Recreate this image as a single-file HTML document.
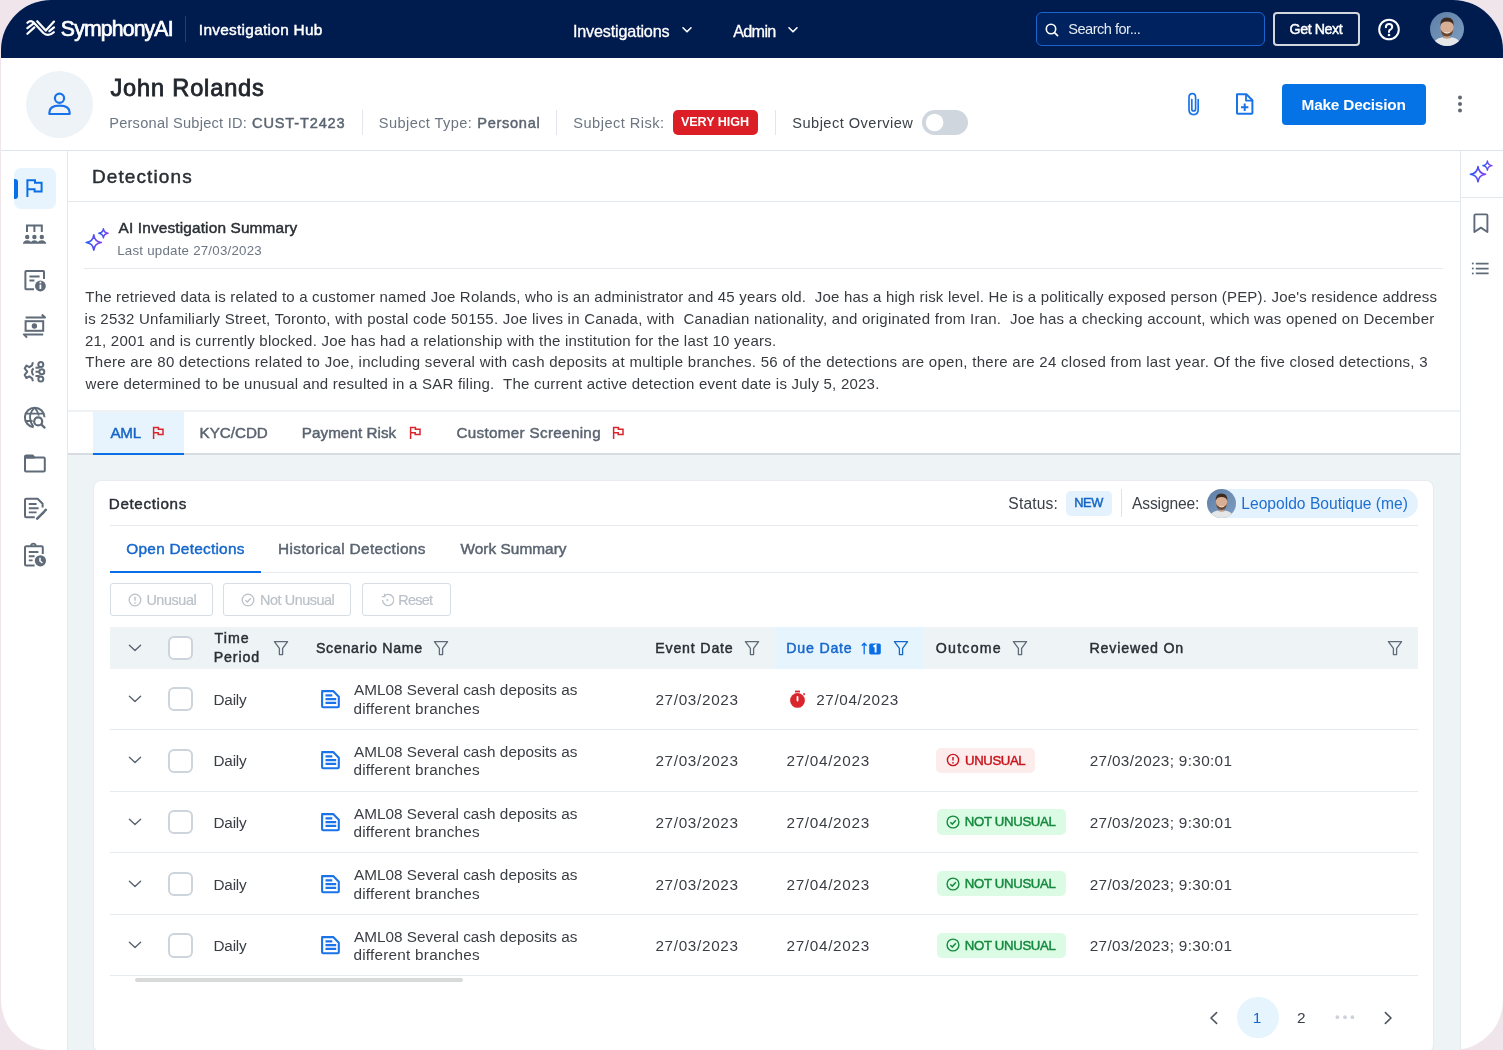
<!DOCTYPE html>
<html><head><meta charset="utf-8"><style>
html,body{margin:0;padding:0;}
body{width:1503px;height:1050px;overflow:hidden;background:#f0e5eb;position:relative;font-family:"Liberation Sans",sans-serif;}
#pg{position:absolute;left:1px;top:0;width:1502px;height:1050px;overflow:hidden;border-radius:50px;background:#fff;}
#in{position:absolute;left:-1px;top:0;width:1503px;height:1050px;will-change:transform;}
.t{position:absolute;white-space:pre;}
.r{position:absolute;}
</style></head><body><div id="pg"><div id="in">
<div class="r" style="left:0px;top:0px;width:1503px;height:58px;background:#001c4f;"></div>
<svg class="r" style="left:22px;top:15px;" width="40" height="25" viewBox="0 0 40 25" fill="none"><g stroke="#fff" stroke-width="2.2" stroke-linecap="round" stroke-linejoin="round" fill="none">
<path d="M5.4,7.8 Q8.6,4.6 11.6,7.4 L21.4,18 Q26.4,22.2 31.8,17.2"/>
<path d="M5.4,13.2 L11,8.8"/><path d="M5.4,18.8 L12.4,12.4"/>
<path d="M15.2,6.2 L23.8,15.6 L32,6.6"/>
<path d="M27.4,16.2 L32,12.4"/></g></svg>
<div class="t" style="left:60.85px;top:17.55px;font-size:21.20px;line-height:21.20px;-webkit-text-stroke:0.7px #fff;color:#fff;letter-spacing:-0.822px;">SymphonyAI</div>
<div class="r" style="left:185px;top:16px;width:1px;height:26px;background:#1d3f78;"></div>
<div class="t" style="left:198.82px;top:22.06px;font-size:15.40px;line-height:15.40px;-webkit-text-stroke:0.45px #fff;color:#fff;letter-spacing:0.291px;">Investigation Hub</div>
<div class="t" style="left:572.95px;top:23.18px;font-size:16.20px;line-height:16.20px;-webkit-text-stroke:0.3px #fff;color:#fff;letter-spacing:-0.177px;">Investigations</div>
<svg class="r" style="left:680px;top:25px;" width="14" height="10" viewBox="0 0 14 10" fill="none"><path d="M3,2.8 L7,6.8 L11,2.8" stroke="#fff" stroke-width="1.6" stroke-linecap="round" stroke-linejoin="round"/></svg>
<div class="t" style="left:733.15px;top:23.18px;font-size:16.20px;line-height:16.20px;-webkit-text-stroke:0.3px #fff;color:#fff;letter-spacing:-0.675px;">Admin</div>
<svg class="r" style="left:786px;top:25px;" width="14" height="10" viewBox="0 0 14 10" fill="none"><path d="M3,2.8 L7,6.8 L11,2.8" stroke="#fff" stroke-width="1.6" stroke-linecap="round" stroke-linejoin="round"/></svg>
<div class="r" style="left:1036px;top:12px;width:229px;height:34px;background:#00235f;box-sizing:border-box;border:1.5px solid #1a64cf;border-radius:6px;"></div>
<svg class="r" style="left:1043px;top:21px;" width="18" height="18" viewBox="0 0 18 18" fill="none"><circle cx="8" cy="8" r="4.7" stroke="#fff" stroke-width="1.6"/><path d="M11.5,11.6 L14.6,14.6" stroke="#fff" stroke-width="1.6" stroke-linecap="round"/></svg>
<div class="t" style="left:1068.30px;top:22.04px;font-size:14.60px;line-height:14.60px;color:#e6ebf2;letter-spacing:-0.517px;">Search for...</div>
<div class="r" style="left:1273px;top:12px;width:87px;height:34px;background:transparent;box-sizing:border-box;border:2px solid #d3d8de;border-radius:4px;"></div>
<div class="t" style="left:1289.53px;top:22.38px;font-size:14.20px;line-height:14.20px;-webkit-text-stroke:0.45px #fff;color:#fff;letter-spacing:-0.393px;">Get Next</div>
<svg class="r" style="left:1377px;top:18px;" width="24" height="24" viewBox="0 0 24 24" fill="none"><circle cx="12" cy="11.5" r="9.8" stroke="#fff" stroke-width="2"/><path d="M8.9,9.2 Q9,6 12,6 Q15.2,6 15.2,9 Q15.2,11 12.8,12 Q12,12.4 12,14" stroke="#fff" stroke-width="2" stroke-linecap="round" fill="none"/><circle cx="12" cy="17" r="1.3" fill="#fff"/></svg>
<svg class="r" style="left:1430px;top:12px;" width="34" height="34" viewBox="0 0 34 34" fill="none"><defs><clipPath id="ca1"><circle cx="17" cy="17" r="17"/></clipPath><linearGradient id="ca1g" x1="0" y1="0" x2="1" y2="1"><stop offset="0" stop-color="#5f7fa6"/><stop offset="1" stop-color="#7d9dc2"/></linearGradient></defs>
<g clip-path="url(#ca1)"><rect width="34" height="34" fill="url(#ca1g)"/>
<rect x="14" y="21" width="6" height="6" fill="#c49a80"/>
<path d="M2.5,34 Q4,26.5 12.4,25.2 Q17,28.4 21.6,25.2 Q30,26.5 31.5,34Z" fill="#e4e6e8"/>
<ellipse cx="17" cy="15.6" rx="6.6" ry="8.2" fill="#d8ae94"/>
<path d="M10.3,14 Q9.6,5.4 17,5.4 Q24.4,5.4 23.7,14 Q23,9.4 17,9.4 Q11,9.4 10.3,14Z" fill="#3d2a1f"/>
<path d="M10.6,16.4 Q10.8,24.4 17,24.6 Q23.2,24.4 23.4,16.4 Q22.4,21.2 17,21.2 Q11.6,21.2 10.6,16.4Z" fill="#6a4834"/>
<path d="M14.4,20.4 Q17,21.8 19.6,20.4" stroke="#f4f1ee" stroke-width="1" fill="none"/>
</g></svg>
<div class="r" style="left:0px;top:57px;width:1px;height:993px;background:#f0e5eb;"></div>
<div class="r" style="left:0px;top:150px;width:1503px;height:1px;background:#dfe4e9;"></div>
<svg class="r" style="left:26px;top:71px;" width="67" height="67" viewBox="0 0 67 67" fill="none"><circle cx="33.5" cy="33.5" r="33.5" fill="#eef3f7"/></svg>
<svg class="r" style="left:46px;top:91px;" width="28" height="28" viewBox="0 0 28 28" fill="none"><circle cx="13.5" cy="7.2" r="4.6" stroke="#1a73e8" stroke-width="2.2"/><path d="M3.4,23 L3.4,21.6 Q3.4,14.6 13.5,14.6 Q23.6,14.6 23.6,21.6 L23.6,23 Z" stroke="#1a73e8" stroke-width="2.2" stroke-linejoin="round"/></svg>
<div class="t" style="left:110.40px;top:77.02px;font-size:23.60px;line-height:23.60px;-webkit-text-stroke:0.8px #21262c;color:#21262c;letter-spacing:0.836px;">John Rolands</div>
<div class="t" style="left:109.20px;top:116.14px;font-size:14.60px;line-height:14.60px;color:#6c7683;letter-spacing:0.242px;">Personal Subject ID:</div>
<div class="t" style="left:252.12px;top:116.14px;font-size:14.60px;line-height:14.60px;-webkit-text-stroke:0.45px #5a6470;color:#5a6470;letter-spacing:0.817px;">CUST-T2423</div>
<div class="r" style="left:362px;top:110px;width:1px;height:25px;background:#e3e7eb;"></div>
<div class="t" style="left:378.80px;top:116.14px;font-size:14.60px;line-height:14.60px;color:#6c7683;letter-spacing:0.408px;">Subject Type:</div>
<div class="t" style="left:477.32px;top:116.14px;font-size:14.60px;line-height:14.60px;-webkit-text-stroke:0.45px #5a6470;color:#5a6470;letter-spacing:0.679px;">Personal</div>
<div class="r" style="left:556px;top:110px;width:1px;height:25px;background:#e3e7eb;"></div>
<div class="t" style="left:573.30px;top:116.14px;font-size:14.60px;line-height:14.60px;color:#6c7683;letter-spacing:0.475px;">Subject Risk:</div>
<div class="r" style="left:672.5px;top:110px;width:85px;height:24.8px;background:#dc1f26;border-radius:5px;"></div>
<div class="t" style="left:680.90px;top:115.93px;font-size:12.60px;line-height:12.60px;font-weight:bold;color:#fff;letter-spacing:-0.038px;">VERY HIGH</div>
<div class="r" style="left:774.5px;top:110px;width:1px;height:25px;background:#e3e7eb;"></div>
<div class="t" style="left:792.30px;top:116.14px;font-size:14.60px;line-height:14.60px;color:#3a4149;letter-spacing:0.467px;">Subject Overview</div>
<div class="r" style="left:922px;top:110px;width:46px;height:25px;background:#cfd6de;border-radius:13px;"></div>
<svg class="r" style="left:922px;top:110px;" width="25" height="25" viewBox="0 0 25 25" fill="none"><circle cx="12.6" cy="12.5" r="8.8" fill="#fff"/></svg>
<svg class="r" style="left:1183px;top:90px;" width="22" height="28" viewBox="0 0 22 28" fill="none"><path d="M15.2,9.6 L15.2,19.6 Q15.2,24.6 10.6,24.6 Q6,24.6 6,19.6 L6,7.4 Q6,3.6 9.4,3.6 Q12.6,3.6 12.6,7.4 L12.6,19 Q12.6,21 10.6,21 Q8.8,21 8.8,19 L8.8,9.6" stroke="#1a73e8" stroke-width="1.7" stroke-linecap="round" fill="none"/></svg>
<svg class="r" style="left:1233px;top:91px;" width="24" height="26" viewBox="0 0 24 26" fill="none"><path d="M4,3.2 L13.4,3.2 L19.4,9.2 L19.4,22 Q19.4,22.8 18.6,22.8 L4.8,22.8 Q4,22.8 4,22 Z" stroke="#1a73e8" stroke-width="2" stroke-linejoin="round"/><path d="M13,3.4 L13,9.6 L19.2,9.6" stroke="#1a73e8" stroke-width="1.8" stroke-linejoin="round"/><path d="M11.7,12.5 L11.7,20 M8,16.3 L15.4,16.3" stroke="#1a73e8" stroke-width="2"/></svg>
<div class="r" style="left:1282px;top:83.5px;width:144px;height:41px;background:#0572e6;border-radius:4px;"></div>
<div class="t" style="left:1301.60px;top:97.16px;font-size:15.40px;line-height:15.40px;font-weight:bold;color:#fff;letter-spacing:-0.225px;">Make Decision</div>
<svg class="r" style="left:1454px;top:92px;" width="12" height="24" viewBox="0 0 12 24" fill="none"><circle cx="6" cy="5.5" r="2" fill="#5f6873"/><circle cx="6" cy="12" r="2" fill="#5f6873"/><circle cx="6" cy="18.5" r="2" fill="#5f6873"/></svg>
<div class="r" style="left:67px;top:151px;width:1px;height:899px;background:#e3e8ed;"></div>
<div class="r" style="left:1460px;top:151px;width:1px;height:899px;background:#e3e8ed;"></div>
<div class="r" style="left:1461px;top:197px;width:42px;height:1px;background:#e3e8ed;"></div>
<div class="r" style="left:13.5px;top:167.5px;width:42px;height:41.5px;background:#e8f4fd;border-radius:7px;"></div>
<div class="r" style="left:13.5px;top:178.5px;width:4px;height:20px;background:#0a6fe6;border-radius:0 3px 3px 0;"></div>
<svg class="r" style="left:20px;top:172px;" width="30" height="30" viewBox="0 0 30 30" fill="none"><path d="M7.4,25 L7.4,8.3 L15,8.3 L15,10.8 L21.6,10.8 L21.6,19.6 L14.6,19.6 L14.6,17.2 L7.4,17.2" stroke="#0a6fe6" stroke-width="2" stroke-linejoin="miter" fill="none" transform="translate(0,0)"/></svg>
<svg class="r" style="left:20px;top:220px;" width="30" height="30" viewBox="0 0 30 30" fill="none"><path d="M7,12 L7,5.6 L21.8,5.6 L21.8,12 M14.4,5.6 L14.4,12" stroke="#5f6b78" stroke-width="2" fill="none"/>
<circle cx="7.2" cy="17" r="2.2" fill="#5f6b78"/><circle cx="14.4" cy="17" r="2.2" fill="#5f6b78"/><circle cx="21.8" cy="17" r="2.2" fill="#5f6b78"/>
<path d="M2.8,23.8 Q3.6,20.2 7.2,20.2 Q10,20.2 11,22 Q12,20.2 14.4,20.2 Q16.8,20.2 17.8,22 Q18.8,20.2 21.8,20.2 Q25.4,20.2 26.4,23.8 Z" fill="#5f6b78"/></svg>
<svg class="r" style="left:20px;top:266px;" width="30" height="30" viewBox="0 0 30 30" fill="none"><path d="M14,23.2 L6.2,23.2 Q5.4,23.2 5.4,22.4 L5.4,5.8 Q5.4,5 6.2,5 L23.2,5 Q24,5 24,5.8 L24,13" stroke="#5f6b78" stroke-width="2" fill="none"/>
<path d="M9.4,10.6 L19.6,10.6 M9.4,14.6 L14.4,14.6" stroke="#5f6b78" stroke-width="2"/>
<circle cx="20.4" cy="20" r="5.4" fill="#5f6b78"/><path d="M20.4,18.6 L20.4,23" stroke="#fff" stroke-width="1.8"/><circle cx="20.4" cy="16.6" r="1" fill="#fff"/></svg>
<svg class="r" style="left:20px;top:311px;" width="30" height="30" viewBox="0 0 30 30" fill="none"><path d="M5.6,6.4 L25,6.4 L21.8,3.4" stroke="#5f6b78" stroke-width="2" fill="none" stroke-linejoin="round"/>
<rect x="5.6" y="10.2" width="17.6" height="9.6" stroke="#5f6b78" stroke-width="2" fill="none"/>
<circle cx="14.4" cy="15" r="2.7" fill="#5f6b78"/>
<path d="M23.2,23.4 L3.8,23.4 L7,26.6" stroke="#5f6b78" stroke-width="2" fill="none" stroke-linejoin="round"/></svg>
<svg class="r" style="left:20px;top:357px;" width="30" height="30" viewBox="0 0 30 30" fill="none"><path d="M12.9,5.2 L12.1,8.3 L9.3,10.2 L6.4,8.5 L4.7,11.4 L7.3,14.6 L4.7,17.9 L6.4,21 L9.3,19.4 L12.1,21.3 L12.9,24.3" stroke="#5f6b78" stroke-width="2" fill="none" stroke-linejoin="round"/>
<path d="M13.6,11.4 A4.4,4.4 0 0 0 13.6,18.3" stroke="#5f6b78" stroke-width="2" fill="none"/>
<path d="M15.5,10.8 L18.8,10.8 L19.6,9.8 M15.5,14.8 L19.2,14.8 M15.5,19 L18.8,19 L19.6,20" stroke="#5f6b78" stroke-width="2" fill="none"/>
<circle cx="20.8" cy="7.5" r="2.5" stroke="#5f6b78" stroke-width="2"/><circle cx="21.8" cy="14.8" r="2.5" stroke="#5f6b78" stroke-width="2"/><circle cx="20.8" cy="22" r="2.5" stroke="#5f6b78" stroke-width="2"/></svg>
<svg class="r" style="left:20px;top:403px;" width="30" height="30" viewBox="0 0 30 30" fill="none"><path d="M24.5,14.2 A9.8,9.8 0 1 0 13.6,24.2" stroke="#5f6b78" stroke-width="2" fill="none"/>
<path d="M14.6,4.6 Q9.8,9.6 10,14.4 Q10.2,19.6 13.4,23.6 M14.6,4.6 Q18,8.4 18.8,12.6 M5.4,10.6 L23.6,10.6 M5,18 L12.6,18" stroke="#5f6b78" stroke-width="1.8" fill="none"/>
<circle cx="18.2" cy="18.4" r="4" stroke="#5f6b78" stroke-width="2.2"/><path d="M21.2,21.4 L24.6,24.6" stroke="#5f6b78" stroke-width="2.2" stroke-linecap="round"/></svg>
<svg class="r" style="left:20px;top:448px;" width="30" height="30" viewBox="0 0 30 30" fill="none"><path d="M5,22.6 L5,8.6 Q5,7.4 6.2,7.4 L12.6,7.4 L14.6,9.6 L23.6,9.6 Q24.8,9.6 24.8,10.8 L24.8,22.6 Q24.8,23.6 23.6,23.6 L6,23.6 Q5,23.6 5,22.6 Z" stroke="#5f6b78" stroke-width="2" fill="none" stroke-linejoin="round"/>
<path d="M5,10.8 L5,8.4 Q5,7.4 6.2,7.4 L12.4,7.4 L14.4,9.6 L14.4,10.8 Z" fill="#5f6b78"/></svg>
<svg class="r" style="left:20px;top:494px;" width="30" height="30" viewBox="0 0 30 30" fill="none"><path d="M14.8,23.2 L6.2,23.2 Q5,23.2 5,22 L5,6 Q5,4.8 6.2,4.8 L17.6,4.8 L22.6,9.8 L22.6,13.6" stroke="#5f6b78" stroke-width="2" fill="none" stroke-linejoin="round"/>
<path d="M8.8,10 L16.6,10 M8.8,14.2 L18.6,14.2 M8.8,18.4 L16.6,18.4" stroke="#5f6b78" stroke-width="1.9"/>
<path d="M17.2,24.6 L24,17.8 M25,16.6 L25.8,15.8" stroke="#5f6b78" stroke-width="2.6" stroke-linecap="round"/></svg>
<svg class="r" style="left:20px;top:540px;" width="30" height="30" viewBox="0 0 30 30" fill="none"><path d="M14.6,25.4 L6.2,25.4 Q5,25.4 5,24.2 L5,7.4 Q5,6.2 6.2,6.2 L21.6,6.2 Q22.8,6.2 22.8,7.4 L22.8,14" stroke="#5f6b78" stroke-width="2" fill="none"/>
<path d="M11,6.4 Q11,3.6 13.4,3.6 Q15.8,3.6 15.8,6.4" stroke="#5f6b78" stroke-width="1.8" fill="none"/>
<path d="M8.8,12 L18.4,12 M8.8,16.2 L14.6,16.2 M8.8,20.4 L12.6,20.4" stroke="#5f6b78" stroke-width="1.9"/>
<circle cx="20.4" cy="20.8" r="5.6" fill="#5f6b78"/><path d="M20,17.8 L20,21 L22.4,23" stroke="#fff" stroke-width="1.5" fill="none"/></svg>
<svg class="r" style="left:1464px;top:157px" width="34" height="32" viewBox="0 0 34 32" fill="none"><defs><linearGradient id="sg1" x1="0" y1="0" x2="1" y2="0"><stop offset="0" stop-color="#1f5cf4"/><stop offset="1" stop-color="#8c3ef2"/></linearGradient></defs><path d="M14,9.6 Q14.76,16.439999999999998 21.6,17.2 Q14.76,17.96 14,24.799999999999997 Q13.24,17.96 6.4,17.2 Q13.24,16.439999999999998 14,9.6 Z" stroke="url(#sg1)" stroke-width="1.6" stroke-linejoin="round"/><path d="M23.4,4.0 Q23.86,8.14 28.0,8.6 Q23.86,9.059999999999999 23.4,13.2 Q22.939999999999998,9.059999999999999 18.799999999999997,8.6 Q22.939999999999998,8.14 23.4,4.0 Z" stroke="url(#sg1)" stroke-width="1.4" stroke-linejoin="round"/></svg>
<svg class="r" style="left:1466px;top:208px;" width="30" height="30" viewBox="0 0 30 30" fill="none"><path d="M8.4,24 L8.4,7.6 Q8.4,6.4 9.6,6.4 L20.2,6.4 Q21.4,6.4 21.4,7.6 L21.4,24 L14.9,19.6 Z" stroke="#5f6b78" stroke-width="1.9" fill="none" stroke-linejoin="round"/></svg>
<svg class="r" style="left:1466px;top:254px;" width="30" height="30" viewBox="0 0 30 30" fill="none"><path d="M9.8,9.6 L22.6,9.6 M9.8,14.6 L22.6,14.6 M9.8,19.4 L22.6,19.4" stroke="#5f6b78" stroke-width="1.8"/><circle cx="6.8" cy="9.6" r="1" fill="#5f6b78"/><circle cx="6.8" cy="14.6" r="1" fill="#5f6b78"/><circle cx="6.8" cy="19.4" r="1" fill="#5f6b78"/></svg>
<div class="t" style="left:92.02px;top:167.21px;font-size:19.00px;line-height:19.00px;-webkit-text-stroke:0.45px #2a2f35;color:#2a2f35;letter-spacing:1.094px;">Detections</div>
<div class="r" style="left:68px;top:201px;width:1392px;height:1px;background:#e3e8ed;"></div>
<svg class="r" style="left:80px;top:222px" width="34" height="34" viewBox="0 0 34 34" fill="none"><defs><linearGradient id="sg2" x1="0" y1="0" x2="1" y2="0"><stop offset="0" stop-color="#1f5cf4"/><stop offset="1" stop-color="#8c3ef2"/></linearGradient></defs><path d="M13.8,12.9 Q14.56,19.74 21.4,20.5 Q14.56,21.26 13.8,28.1 Q13.040000000000001,21.26 6.200000000000001,20.5 Q13.040000000000001,19.74 13.8,12.9 Z" stroke="url(#sg2)" stroke-width="1.6" stroke-linejoin="round"/><path d="M23.4,6.700000000000001 Q23.86,10.84 28.0,11.3 Q23.86,11.760000000000002 23.4,15.9 Q22.939999999999998,11.760000000000002 18.799999999999997,11.3 Q22.939999999999998,10.84 23.4,6.700000000000001 Z" stroke="url(#sg2)" stroke-width="1.4" stroke-linejoin="round"/></svg>
<div class="t" style="left:118.52px;top:220.26px;font-size:15.40px;line-height:15.40px;-webkit-text-stroke:0.45px #2a2f35;color:#2a2f35;letter-spacing:0.146px;">AI Investigation Summary</div>
<div class="t" style="left:117.20px;top:243.94px;font-size:13.30px;line-height:13.30px;color:#6c7683;letter-spacing:0.229px;">Last update 27/03/2023</div>
<div class="r" style="left:84px;top:267.5px;width:1359px;height:1px;background:#e6eaee;"></div>
<div class="t" style="left:85.30px;top:289.30px;font-size:15.00px;line-height:15.00px;color:#373a3f;letter-spacing:0.189px;">The retrieved data is related to a customer named Joe Rolands, who is an administrator and 45 years old.  Joe has a high risk level. He is a politically exposed person (PEP). Joe's residence address</div>
<div class="t" style="left:84.60px;top:311.10px;font-size:15.00px;line-height:15.00px;color:#373a3f;letter-spacing:0.239px;">is 2532 Unfamiliarly Street, Toronto, with postal code 50155. Joe lives in Canada, with  Canadian nationality, and originated from Iran.  Joe has a checking account, which was opened on December</div>
<div class="t" style="left:84.90px;top:332.70px;font-size:15.00px;line-height:15.00px;color:#373a3f;letter-spacing:0.232px;">21, 2001 and is currently blocked. Joe has had a relationship with the institution for the last 10 years.</div>
<div class="t" style="left:85.30px;top:354.30px;font-size:15.00px;line-height:15.00px;color:#373a3f;letter-spacing:0.287px;">There are 80 detections related to Joe, including several with cash deposits at multiple branches. 56 of the detections are open, there are 24 closed from last year. Of the five closed detections, 3</div>
<div class="t" style="left:85.60px;top:376.00px;font-size:15.00px;line-height:15.00px;color:#373a3f;letter-spacing:0.232px;">were determined to be unusual and resulted in a SAR filing.  The current active detection event date is July 5, 2023.</div>
<div class="r" style="left:68px;top:410px;width:1392px;height:1.5px;background:#eef2f5;"></div>
<div class="r" style="left:68px;top:453px;width:1392px;height:2px;background:#d6dce2;"></div>
<div class="r" style="left:93px;top:411.5px;width:90.5px;height:41.5px;background:#e8f4fd;"></div>
<div class="r" style="left:93px;top:453px;width:90.5px;height:2px;background:#0a6fe6;"></div>
<div class="t" style="left:110.42px;top:425.23px;font-size:15.20px;line-height:15.20px;-webkit-text-stroke:0.45px #1565c6;color:#1565c6;letter-spacing:-0.225px;">AML</div>
<svg class="r" style="left:152px;top:425.5px;" width="14" height="14" viewBox="0 0 14 14" fill="none"><path d="M1.6,13 L1.6,1.4 L6.4,1.4 L6.4,3.2 L11,3.2 L11,8.6 L6.2,8.6 L6.2,6.8 L1.6,6.8" stroke="#d9262c" stroke-width="1.5" fill="none"/></svg>
<div class="t" style="left:199.53px;top:425.23px;font-size:15.20px;line-height:15.20px;-webkit-text-stroke:0.45px #5a6470;color:#5a6470;letter-spacing:-0.008px;">KYC/CDD</div>
<div class="t" style="left:301.82px;top:425.23px;font-size:15.20px;line-height:15.20px;-webkit-text-stroke:0.45px #5a6470;color:#5a6470;letter-spacing:0.059px;">Payment Risk</div>
<svg class="r" style="left:409px;top:425.5px;" width="14" height="14" viewBox="0 0 14 14" fill="none"><path d="M1.6,13 L1.6,1.4 L6.4,1.4 L6.4,3.2 L11,3.2 L11,8.6 L6.2,8.6 L6.2,6.8 L1.6,6.8" stroke="#d9262c" stroke-width="1.5" fill="none"/></svg>
<div class="t" style="left:456.43px;top:425.23px;font-size:15.20px;line-height:15.20px;-webkit-text-stroke:0.45px #5a6470;color:#5a6470;letter-spacing:0.338px;">Customer Screening</div>
<svg class="r" style="left:611.5px;top:425.5px;" width="14" height="14" viewBox="0 0 14 14" fill="none"><path d="M1.6,13 L1.6,1.4 L6.4,1.4 L6.4,3.2 L11,3.2 L11,8.6 L6.2,8.6 L6.2,6.8 L1.6,6.8" stroke="#d9262c" stroke-width="1.5" fill="none"/></svg>
<div class="r" style="left:68px;top:455px;width:1392px;height:595px;background:#eef3f6;"></div>
<div class="r" style="left:93px;top:480px;width:1341px;height:573px;background:#fff;box-sizing:border-box;border:1px solid #e8ecf0;border-radius:8px;"></div>
<div class="t" style="left:108.83px;top:495.73px;font-size:15.20px;line-height:15.20px;-webkit-text-stroke:0.45px #2a2f35;color:#2a2f35;letter-spacing:0.628px;">Detections</div>
<div class="t" style="left:1008.30px;top:495.99px;font-size:15.60px;line-height:15.60px;color:#3a4149;letter-spacing:0.183px;">Status:</div>
<div class="r" style="left:1066.3px;top:490.8px;width:46.2px;height:25.1px;background:#e4f2fd;border-radius:5px;"></div>
<div class="t" style="left:1074.22px;top:496.96px;font-size:12.80px;line-height:12.80px;-webkit-text-stroke:0.45px #1565c6;color:#1565c6;letter-spacing:-0.425px;">NEW</div>
<div class="r" style="left:1121px;top:489px;width:1px;height:28.4px;background:#dfe3e8;"></div>
<div class="t" style="left:1132.00px;top:495.99px;font-size:15.60px;line-height:15.60px;color:#3a4149;letter-spacing:-0.137px;">Assignee:</div>
<div class="r" style="left:1206.5px;top:489px;width:211.8px;height:29px;background:#e4f2fd;border-radius:15px;"></div>
<svg class="r" style="left:1206.5px;top:489px;" width="29" height="29" viewBox="0 0 34 34" fill="none"><defs><clipPath id="ca2"><circle cx="17" cy="17" r="17"/></clipPath><linearGradient id="ca2g" x1="0" y1="0" x2="1" y2="1"><stop offset="0" stop-color="#5f7fa6"/><stop offset="1" stop-color="#7d9dc2"/></linearGradient></defs>
<g clip-path="url(#ca2)"><rect width="34" height="34" fill="url(#ca2g)"/>
<rect x="14" y="21" width="6" height="6" fill="#c49a80"/>
<path d="M2.5,34 Q4,26.5 12.4,25.2 Q17,28.4 21.6,25.2 Q30,26.5 31.5,34Z" fill="#e4e6e8"/>
<ellipse cx="17" cy="15.6" rx="6.6" ry="8.2" fill="#d8ae94"/>
<path d="M10.3,14 Q9.6,5.4 17,5.4 Q24.4,5.4 23.7,14 Q23,9.4 17,9.4 Q11,9.4 10.3,14Z" fill="#3d2a1f"/>
<path d="M10.6,16.4 Q10.8,24.4 17,24.6 Q23.2,24.4 23.4,16.4 Q22.4,21.2 17,21.2 Q11.6,21.2 10.6,16.4Z" fill="#6a4834"/>
<path d="M14.4,20.4 Q17,21.8 19.6,20.4" stroke="#f4f1ee" stroke-width="1" fill="none"/>
</g></svg>
<div class="t" style="left:1241.30px;top:495.99px;font-size:15.60px;line-height:15.60px;color:#1f6fd1;letter-spacing:0.010px;">Leopoldo Boutique (me)</div>
<div class="r" style="left:109.8px;top:525.2px;width:1308.4px;height:1px;background:#e6eaee;"></div>
<div class="t" style="left:126.33px;top:541.36px;font-size:15.40px;line-height:15.40px;-webkit-text-stroke:0.45px #1667cc;color:#1667cc;letter-spacing:0.246px;">Open Detections</div>
<div class="t" style="left:278.12px;top:541.36px;font-size:15.40px;line-height:15.40px;-webkit-text-stroke:0.45px #5a6470;color:#5a6470;letter-spacing:0.353px;">Historical Detections</div>
<div class="t" style="left:460.43px;top:541.36px;font-size:15.40px;line-height:15.40px;-webkit-text-stroke:0.45px #5a6470;color:#5a6470;letter-spacing:0.032px;">Work Summary</div>
<div class="r" style="left:109.8px;top:571.5px;width:1308.4px;height:1.6px;background:#e6ebef;"></div>
<div class="r" style="left:109.8px;top:570.8px;width:151.6px;height:2.4px;background:#0a6fe6;"></div>
<div class="r" style="left:109.6px;top:583.4px;width:103.7px;height:32.8px;background:transparent;box-sizing:border-box;border:1px solid #d7dde2;border-radius:3px;"></div>
<div class="r" style="left:223.4px;top:583.4px;width:128.1px;height:32.8px;background:transparent;box-sizing:border-box;border:1px solid #d7dde2;border-radius:3px;"></div>
<div class="r" style="left:362.3px;top:583.4px;width:88.6px;height:32.8px;background:transparent;box-sizing:border-box;border:1px solid #d7dde2;border-radius:3px;"></div>
<svg class="r" style="left:127.7px;top:593px;" width="14" height="14" viewBox="0 0 14 14" fill="none"><circle cx="7" cy="7" r="5.8" stroke="#bac1c8" stroke-width="1.3"/><path d="M7,3.8 L7,7.8" stroke="#bac1c8" stroke-width="1.4"/><circle cx="7" cy="9.9" r="0.8" fill="#bac1c8"/></svg>
<div class="t" style="left:146.40px;top:592.51px;font-size:14.40px;line-height:14.40px;-webkit-text-stroke:0.2px #bac1c8;color:#bac1c8;letter-spacing:-0.417px;">Unusual</div>
<svg class="r" style="left:240.8px;top:593px;" width="14" height="14" viewBox="0 0 14 14" fill="none"><circle cx="7" cy="7" r="5.8" stroke="#bac1c8" stroke-width="1.3"/><path d="M4.4,7.2 L6.3,9 L9.8,5.2" stroke="#bac1c8" stroke-width="1.3" fill="none"/></svg>
<div class="t" style="left:260.10px;top:592.51px;font-size:14.40px;line-height:14.40px;-webkit-text-stroke:0.2px #bac1c8;color:#bac1c8;letter-spacing:-0.450px;">Not Unusual</div>
<svg class="r" style="left:379.7px;top:593px;" width="14" height="14" viewBox="0 0 14 14" fill="none"><path d="M2.6,7 A5.6,5.6 0 1 0 4.4,2.9" stroke="#bac1c8" stroke-width="1.3" fill="none"/><path d="M4.6,0.8 L4.6,3.6 L1.8,3.6" stroke="#bac1c8" stroke-width="1.3" fill="none"/><circle cx="7.4" cy="7" r="1" fill="#bac1c8"/></svg>
<div class="t" style="left:398.30px;top:592.51px;font-size:14.40px;line-height:14.40px;-webkit-text-stroke:0.2px #bac1c8;color:#bac1c8;letter-spacing:-0.725px;">Reset</div>
<div class="r" style="left:110px;top:627px;width:1308.2px;height:41.5px;background:#eef3f6;"></div>
<div class="r" style="left:774.7px;top:627px;width:148.2px;height:41.5px;background:#e6f4fd;"></div>
<svg class="r" style="left:126.80000000000001px;top:640px;" width="16" height="16" viewBox="0 0 16 16" fill="none"><path d="M2.4,5.3 L8,10.6 L13.6,5.3" stroke="#59626d" stroke-width="1.35" fill="none" stroke-linecap="round" stroke-linejoin="round"/></svg>
<div class="r" style="left:168px;top:636px;width:24.6px;height:24.2px;background:#fff;box-sizing:border-box;border:2px solid #cdd4dc;border-radius:6px;"></div>
<div class="t" style="left:214.62px;top:631.48px;font-size:14.20px;line-height:14.20px;-webkit-text-stroke:0.45px #2a2f35;color:#2a2f35;letter-spacing:1.050px;">Time</div>
<div class="t" style="left:213.72px;top:649.88px;font-size:14.20px;line-height:14.20px;-webkit-text-stroke:0.45px #2a2f35;color:#2a2f35;letter-spacing:0.890px;">Period</div>
<svg class="r" style="left:272.5px;top:639.8px;" width="17" height="17" viewBox="0 0 17 17" fill="none"><path d="M1.4,1.6 L14.6,1.6 L9.6,8.4 L9.6,14.6 L6.4,14.6 L6.4,8.4 Z" stroke="#5f6b78" stroke-width="1.3" fill="none" stroke-linejoin="round"/></svg>
<div class="t" style="left:315.92px;top:640.98px;font-size:14.20px;line-height:14.20px;-webkit-text-stroke:0.45px #2a2f35;color:#2a2f35;letter-spacing:0.713px;">Scenario Name</div>
<svg class="r" style="left:433.4px;top:639.8px;" width="17" height="17" viewBox="0 0 17 17" fill="none"><path d="M1.4,1.6 L14.6,1.6 L9.6,8.4 L9.6,14.6 L6.4,14.6 L6.4,8.4 Z" stroke="#5f6b78" stroke-width="1.3" fill="none" stroke-linejoin="round"/></svg>
<div class="t" style="left:655.23px;top:640.98px;font-size:14.20px;line-height:14.20px;-webkit-text-stroke:0.45px #2a2f35;color:#2a2f35;letter-spacing:0.817px;">Event Date</div>
<svg class="r" style="left:743.7px;top:639.8px;" width="17" height="17" viewBox="0 0 17 17" fill="none"><path d="M1.4,1.6 L14.6,1.6 L9.6,8.4 L9.6,14.6 L6.4,14.6 L6.4,8.4 Z" stroke="#5f6b78" stroke-width="1.3" fill="none" stroke-linejoin="round"/></svg>
<div class="t" style="left:786.32px;top:640.98px;font-size:14.20px;line-height:14.20px;-webkit-text-stroke:0.45px #1667cc;color:#1667cc;letter-spacing:0.779px;">Due Date</div>
<svg class="r" style="left:860px;top:639.8px;" width="24" height="17" viewBox="0 0 24 17" fill="none"><path d="M4.2,14.2 L4.2,3.4 M1.8,5.8 L4.2,3.2 L6.6,5.8" stroke="#0a6fe6" stroke-width="1.3" fill="none"/><rect x="9.2" y="3.4" width="11.6" height="11" rx="1.6" fill="#0a6fe6"/><path d="M13.4,6.6 L15.6,5.4 L15.6,12.4" stroke="#fff" stroke-width="1.9" fill="none"/></svg>
<svg class="r" style="left:892.7px;top:639.8px;" width="17" height="17" viewBox="0 0 17 17" fill="none"><path d="M1.4,1.6 L14.6,1.6 L9.6,8.4 L9.6,14.6 L6.4,14.6 L6.4,8.4 Z" stroke="#1667cc" stroke-width="1.3" fill="none" stroke-linejoin="round"/></svg>
<div class="t" style="left:935.82px;top:640.98px;font-size:14.20px;line-height:14.20px;-webkit-text-stroke:0.45px #2a2f35;color:#2a2f35;letter-spacing:1.225px;">Outcome</div>
<svg class="r" style="left:1012.4px;top:639.8px;" width="17" height="17" viewBox="0 0 17 17" fill="none"><path d="M1.4,1.6 L14.6,1.6 L9.6,8.4 L9.6,14.6 L6.4,14.6 L6.4,8.4 Z" stroke="#5f6b78" stroke-width="1.3" fill="none" stroke-linejoin="round"/></svg>
<div class="t" style="left:1089.53px;top:640.98px;font-size:14.20px;line-height:14.20px;-webkit-text-stroke:0.45px #2a2f35;color:#2a2f35;letter-spacing:0.855px;">Reviewed On</div>
<svg class="r" style="left:1387.2px;top:639.8px;" width="17" height="17" viewBox="0 0 17 17" fill="none"><path d="M1.4,1.6 L14.6,1.6 L9.6,8.4 L9.6,14.6 L6.4,14.6 L6.4,8.4 Z" stroke="#5f6b78" stroke-width="1.3" fill="none" stroke-linejoin="round"/></svg>
<svg class="r" style="left:126.80000000000001px;top:690.8px;" width="16" height="16" viewBox="0 0 16 16" fill="none"><path d="M2.4,5.3 L8,10.6 L13.6,5.3" stroke="#59626d" stroke-width="1.35" fill="none" stroke-linecap="round" stroke-linejoin="round"/></svg>
<div class="r" style="left:168px;top:687.0px;width:24.6px;height:24.2px;background:#fff;box-sizing:border-box;border:2px solid #cdd4dc;border-radius:6px;"></div>
<div class="t" style="left:213.50px;top:691.85px;font-size:15.30px;line-height:15.30px;color:#3a3e44;letter-spacing:-0.200px;">Daily</div>
<svg class="r" style="left:318px;top:686.8px;" width="24" height="24" viewBox="0 0 24 24" fill="none"><path d="M4.1,4.1 L15.2,4.1 L20.8,9.7 L20.8,19.2 Q20.8,20.3 19.7,20.3 L5.2,20.3 Q4.1,20.3 4.1,19.2 L4.1,5.2 Q4.1,4.1 5.2,4.1 Z" stroke="#1a73e8" stroke-width="2.1" fill="none" stroke-linejoin="round"/><path d="M7.5,8.4 L14.3,8.4 M7.5,12.1 L18.2,12.1 M7.5,15.9 L18.2,15.9" stroke="#1a73e8" stroke-width="2.1"/></svg>
<div class="t" style="left:354.00px;top:682.35px;font-size:15.30px;line-height:15.30px;color:#3a3e44;letter-spacing:0.024px;">AML08 Several cash deposits as</div>
<div class="t" style="left:353.40px;top:700.85px;font-size:15.30px;line-height:15.30px;color:#3a3e44;letter-spacing:0.241px;">different branches</div>
<div class="t" style="left:655.40px;top:691.85px;font-size:15.30px;line-height:15.30px;color:#3a3e44;letter-spacing:0.678px;">27/03/2023</div>
<svg class="r" style="left:786px;top:687.8px;" width="22" height="22" viewBox="0 0 22 22" fill="none"><circle cx="11.5" cy="12.4" r="7.4" fill="#d9262c"/><rect x="9" y="2.6" width="5" height="1.8" fill="#d9262c"/><path d="M11.5,9 L11.5,12.6" stroke="#fff" stroke-width="1.8" stroke-linecap="round"/><path d="M17.4,5.4 L18.8,6.8" stroke="#d9262c" stroke-width="1.6"/></svg>
<div class="t" style="left:816.20px;top:691.85px;font-size:15.30px;line-height:15.30px;color:#3a3e44;letter-spacing:0.622px;">27/04/2023</div>
<div class="r" style="left:110px;top:729.0px;width:1308.2px;height:1px;background:#e6ebef;"></div>
<svg class="r" style="left:126.80000000000001px;top:752.4px;" width="16" height="16" viewBox="0 0 16 16" fill="none"><path d="M2.4,5.3 L8,10.6 L13.6,5.3" stroke="#59626d" stroke-width="1.35" fill="none" stroke-linecap="round" stroke-linejoin="round"/></svg>
<div class="r" style="left:168px;top:748.6px;width:24.6px;height:24.2px;background:#fff;box-sizing:border-box;border:2px solid #cdd4dc;border-radius:6px;"></div>
<div class="t" style="left:213.50px;top:753.45px;font-size:15.30px;line-height:15.30px;color:#3a3e44;letter-spacing:-0.200px;">Daily</div>
<svg class="r" style="left:318px;top:748.4px;" width="24" height="24" viewBox="0 0 24 24" fill="none"><path d="M4.1,4.1 L15.2,4.1 L20.8,9.7 L20.8,19.2 Q20.8,20.3 19.7,20.3 L5.2,20.3 Q4.1,20.3 4.1,19.2 L4.1,5.2 Q4.1,4.1 5.2,4.1 Z" stroke="#1a73e8" stroke-width="2.1" fill="none" stroke-linejoin="round"/><path d="M7.5,8.4 L14.3,8.4 M7.5,12.1 L18.2,12.1 M7.5,15.9 L18.2,15.9" stroke="#1a73e8" stroke-width="2.1"/></svg>
<div class="t" style="left:354.00px;top:743.95px;font-size:15.30px;line-height:15.30px;color:#3a3e44;letter-spacing:0.024px;">AML08 Several cash deposits as</div>
<div class="t" style="left:353.40px;top:762.45px;font-size:15.30px;line-height:15.30px;color:#3a3e44;letter-spacing:0.241px;">different branches</div>
<div class="t" style="left:655.40px;top:753.45px;font-size:15.30px;line-height:15.30px;color:#3a3e44;letter-spacing:0.678px;">27/03/2023</div>
<div class="t" style="left:786.50px;top:753.45px;font-size:15.30px;line-height:15.30px;color:#3a3e44;letter-spacing:0.678px;">27/04/2023</div>
<div class="r" style="left:936.3px;top:747.8px;width:98.6px;height:25.2px;background:#fdecec;border-radius:5px;"></div>
<svg class="r" style="left:946px;top:753.4px;" width="14" height="14" viewBox="0 0 14 14" fill="none"><circle cx="7" cy="7" r="5.6" stroke="#c8161d" stroke-width="1.4"/><path d="M7,3.9 L7,7.6" stroke="#c8161d" stroke-width="1.5"/><circle cx="7" cy="9.8" r="0.85" fill="#c8161d"/></svg>
<div class="t" style="left:965.12px;top:753.82px;font-size:13.20px;line-height:13.20px;-webkit-text-stroke:0.45px #c8161d;color:#c8161d;letter-spacing:-0.408px;">UNUSUAL</div>
<div class="t" style="left:1089.70px;top:753.45px;font-size:15.30px;line-height:15.30px;color:#3a3e44;letter-spacing:0.344px;">27/03/2023; 9:30:01</div>
<div class="r" style="left:110px;top:790.6px;width:1308.2px;height:1px;background:#e6ebef;"></div>
<svg class="r" style="left:126.80000000000001px;top:814.0px;" width="16" height="16" viewBox="0 0 16 16" fill="none"><path d="M2.4,5.3 L8,10.6 L13.6,5.3" stroke="#59626d" stroke-width="1.35" fill="none" stroke-linecap="round" stroke-linejoin="round"/></svg>
<div class="r" style="left:168px;top:810.2px;width:24.6px;height:24.2px;background:#fff;box-sizing:border-box;border:2px solid #cdd4dc;border-radius:6px;"></div>
<div class="t" style="left:213.50px;top:815.05px;font-size:15.30px;line-height:15.30px;color:#3a3e44;letter-spacing:-0.200px;">Daily</div>
<svg class="r" style="left:318px;top:810.0px;" width="24" height="24" viewBox="0 0 24 24" fill="none"><path d="M4.1,4.1 L15.2,4.1 L20.8,9.7 L20.8,19.2 Q20.8,20.3 19.7,20.3 L5.2,20.3 Q4.1,20.3 4.1,19.2 L4.1,5.2 Q4.1,4.1 5.2,4.1 Z" stroke="#1a73e8" stroke-width="2.1" fill="none" stroke-linejoin="round"/><path d="M7.5,8.4 L14.3,8.4 M7.5,12.1 L18.2,12.1 M7.5,15.9 L18.2,15.9" stroke="#1a73e8" stroke-width="2.1"/></svg>
<div class="t" style="left:354.00px;top:805.55px;font-size:15.30px;line-height:15.30px;color:#3a3e44;letter-spacing:0.024px;">AML08 Several cash deposits as</div>
<div class="t" style="left:353.40px;top:824.05px;font-size:15.30px;line-height:15.30px;color:#3a3e44;letter-spacing:0.241px;">different branches</div>
<div class="t" style="left:655.40px;top:815.05px;font-size:15.30px;line-height:15.30px;color:#3a3e44;letter-spacing:0.678px;">27/03/2023</div>
<div class="t" style="left:786.50px;top:815.05px;font-size:15.30px;line-height:15.30px;color:#3a3e44;letter-spacing:0.678px;">27/04/2023</div>
<div class="r" style="left:936.5px;top:809.4px;width:129px;height:25.2px;background:#dcfbe5;border-radius:5px;"></div>
<svg class="r" style="left:946px;top:815.0px;" width="14" height="14" viewBox="0 0 14 14" fill="none"><circle cx="7" cy="7" r="5.9" stroke="#15893e" stroke-width="1.4"/><path d="M4.3,7.2 L6.3,9.1 L9.9,5.3" stroke="#15893e" stroke-width="1.5" fill="none"/></svg>
<div class="t" style="left:964.83px;top:815.42px;font-size:13.20px;line-height:13.20px;-webkit-text-stroke:0.45px #15893e;color:#15893e;letter-spacing:-0.325px;">NOT UNUSUAL</div>
<div class="t" style="left:1089.70px;top:815.05px;font-size:15.30px;line-height:15.30px;color:#3a3e44;letter-spacing:0.344px;">27/03/2023; 9:30:01</div>
<div class="r" style="left:110px;top:852.2px;width:1308.2px;height:1px;background:#e6ebef;"></div>
<svg class="r" style="left:126.80000000000001px;top:875.5999999999999px;" width="16" height="16" viewBox="0 0 16 16" fill="none"><path d="M2.4,5.3 L8,10.6 L13.6,5.3" stroke="#59626d" stroke-width="1.35" fill="none" stroke-linecap="round" stroke-linejoin="round"/></svg>
<div class="r" style="left:168px;top:871.8px;width:24.6px;height:24.2px;background:#fff;box-sizing:border-box;border:2px solid #cdd4dc;border-radius:6px;"></div>
<div class="t" style="left:213.50px;top:876.65px;font-size:15.30px;line-height:15.30px;color:#3a3e44;letter-spacing:-0.200px;">Daily</div>
<svg class="r" style="left:318px;top:871.5999999999999px;" width="24" height="24" viewBox="0 0 24 24" fill="none"><path d="M4.1,4.1 L15.2,4.1 L20.8,9.7 L20.8,19.2 Q20.8,20.3 19.7,20.3 L5.2,20.3 Q4.1,20.3 4.1,19.2 L4.1,5.2 Q4.1,4.1 5.2,4.1 Z" stroke="#1a73e8" stroke-width="2.1" fill="none" stroke-linejoin="round"/><path d="M7.5,8.4 L14.3,8.4 M7.5,12.1 L18.2,12.1 M7.5,15.9 L18.2,15.9" stroke="#1a73e8" stroke-width="2.1"/></svg>
<div class="t" style="left:354.00px;top:867.15px;font-size:15.30px;line-height:15.30px;color:#3a3e44;letter-spacing:0.024px;">AML08 Several cash deposits as</div>
<div class="t" style="left:353.40px;top:885.65px;font-size:15.30px;line-height:15.30px;color:#3a3e44;letter-spacing:0.241px;">different branches</div>
<div class="t" style="left:655.40px;top:876.65px;font-size:15.30px;line-height:15.30px;color:#3a3e44;letter-spacing:0.678px;">27/03/2023</div>
<div class="t" style="left:786.50px;top:876.65px;font-size:15.30px;line-height:15.30px;color:#3a3e44;letter-spacing:0.678px;">27/04/2023</div>
<div class="r" style="left:936.5px;top:870.9999999999999px;width:129px;height:25.2px;background:#dcfbe5;border-radius:5px;"></div>
<svg class="r" style="left:946px;top:876.5999999999999px;" width="14" height="14" viewBox="0 0 14 14" fill="none"><circle cx="7" cy="7" r="5.9" stroke="#15893e" stroke-width="1.4"/><path d="M4.3,7.2 L6.3,9.1 L9.9,5.3" stroke="#15893e" stroke-width="1.5" fill="none"/></svg>
<div class="t" style="left:964.83px;top:877.02px;font-size:13.20px;line-height:13.20px;-webkit-text-stroke:0.45px #15893e;color:#15893e;letter-spacing:-0.325px;">NOT UNUSUAL</div>
<div class="t" style="left:1089.70px;top:876.65px;font-size:15.30px;line-height:15.30px;color:#3a3e44;letter-spacing:0.344px;">27/03/2023; 9:30:01</div>
<div class="r" style="left:110px;top:913.8px;width:1308.2px;height:1px;background:#e6ebef;"></div>
<svg class="r" style="left:126.80000000000001px;top:937.1999999999999px;" width="16" height="16" viewBox="0 0 16 16" fill="none"><path d="M2.4,5.3 L8,10.6 L13.6,5.3" stroke="#59626d" stroke-width="1.35" fill="none" stroke-linecap="round" stroke-linejoin="round"/></svg>
<div class="r" style="left:168px;top:933.4px;width:24.6px;height:24.2px;background:#fff;box-sizing:border-box;border:2px solid #cdd4dc;border-radius:6px;"></div>
<div class="t" style="left:213.50px;top:938.25px;font-size:15.30px;line-height:15.30px;color:#3a3e44;letter-spacing:-0.200px;">Daily</div>
<svg class="r" style="left:318px;top:933.1999999999999px;" width="24" height="24" viewBox="0 0 24 24" fill="none"><path d="M4.1,4.1 L15.2,4.1 L20.8,9.7 L20.8,19.2 Q20.8,20.3 19.7,20.3 L5.2,20.3 Q4.1,20.3 4.1,19.2 L4.1,5.2 Q4.1,4.1 5.2,4.1 Z" stroke="#1a73e8" stroke-width="2.1" fill="none" stroke-linejoin="round"/><path d="M7.5,8.4 L14.3,8.4 M7.5,12.1 L18.2,12.1 M7.5,15.9 L18.2,15.9" stroke="#1a73e8" stroke-width="2.1"/></svg>
<div class="t" style="left:354.00px;top:928.75px;font-size:15.30px;line-height:15.30px;color:#3a3e44;letter-spacing:0.024px;">AML08 Several cash deposits as</div>
<div class="t" style="left:353.40px;top:947.25px;font-size:15.30px;line-height:15.30px;color:#3a3e44;letter-spacing:0.241px;">different branches</div>
<div class="t" style="left:655.40px;top:938.25px;font-size:15.30px;line-height:15.30px;color:#3a3e44;letter-spacing:0.678px;">27/03/2023</div>
<div class="t" style="left:786.50px;top:938.25px;font-size:15.30px;line-height:15.30px;color:#3a3e44;letter-spacing:0.678px;">27/04/2023</div>
<div class="r" style="left:936.5px;top:932.5999999999999px;width:129px;height:25.2px;background:#dcfbe5;border-radius:5px;"></div>
<svg class="r" style="left:946px;top:938.1999999999999px;" width="14" height="14" viewBox="0 0 14 14" fill="none"><circle cx="7" cy="7" r="5.9" stroke="#15893e" stroke-width="1.4"/><path d="M4.3,7.2 L6.3,9.1 L9.9,5.3" stroke="#15893e" stroke-width="1.5" fill="none"/></svg>
<div class="t" style="left:964.83px;top:938.62px;font-size:13.20px;line-height:13.20px;-webkit-text-stroke:0.45px #15893e;color:#15893e;letter-spacing:-0.325px;">NOT UNUSUAL</div>
<div class="t" style="left:1089.70px;top:938.25px;font-size:15.30px;line-height:15.30px;color:#3a3e44;letter-spacing:0.344px;">27/03/2023; 9:30:01</div>
<div class="r" style="left:110px;top:975.4px;width:1308.2px;height:1px;background:#e6ebef;"></div>
<div class="r" style="left:134.5px;top:978px;width:328.4px;height:4.2px;background:#d7dad9;border-radius:2.5px;"></div>
<svg class="r" style="left:1206px;top:1010px;" width="16" height="16" viewBox="0 0 16 16" fill="none"><path d="M10.6,2.6 L5,8 L10.6,13.4" stroke="#4d5660" stroke-width="1.6" fill="none" stroke-linecap="round" stroke-linejoin="round"/></svg>
<div class="r" style="left:1237px;top:996.8px;width:41.5px;height:41.5px;background:#e6f4fd;border-radius:50%;"></div>
<div class="t" style="left:1252.80px;top:1010.36px;font-size:15.40px;line-height:15.40px;color:#1667cc;letter-spacing:0.000px;">1</div>
<div class="t" style="left:1297.00px;top:1010.36px;font-size:15.40px;line-height:15.40px;color:#3a4149;letter-spacing:0.000px;">2</div>
<svg class="r" style="left:1332px;top:1011px;" width="26" height="12" viewBox="0 0 26 12" fill="none"><circle cx="5.4" cy="6.2" r="1.9" fill="#cdd3d9"/><circle cx="13" cy="6.2" r="1.9" fill="#cdd3d9"/><circle cx="20.4" cy="6.2" r="1.9" fill="#cdd3d9"/></svg>
<svg class="r" style="left:1380px;top:1010px;" width="16" height="16" viewBox="0 0 16 16" fill="none"><path d="M5.4,2.6 L11,8 L5.4,13.4" stroke="#4d5660" stroke-width="1.6" fill="none" stroke-linecap="round" stroke-linejoin="round"/></svg>
</div></div></body></html>
